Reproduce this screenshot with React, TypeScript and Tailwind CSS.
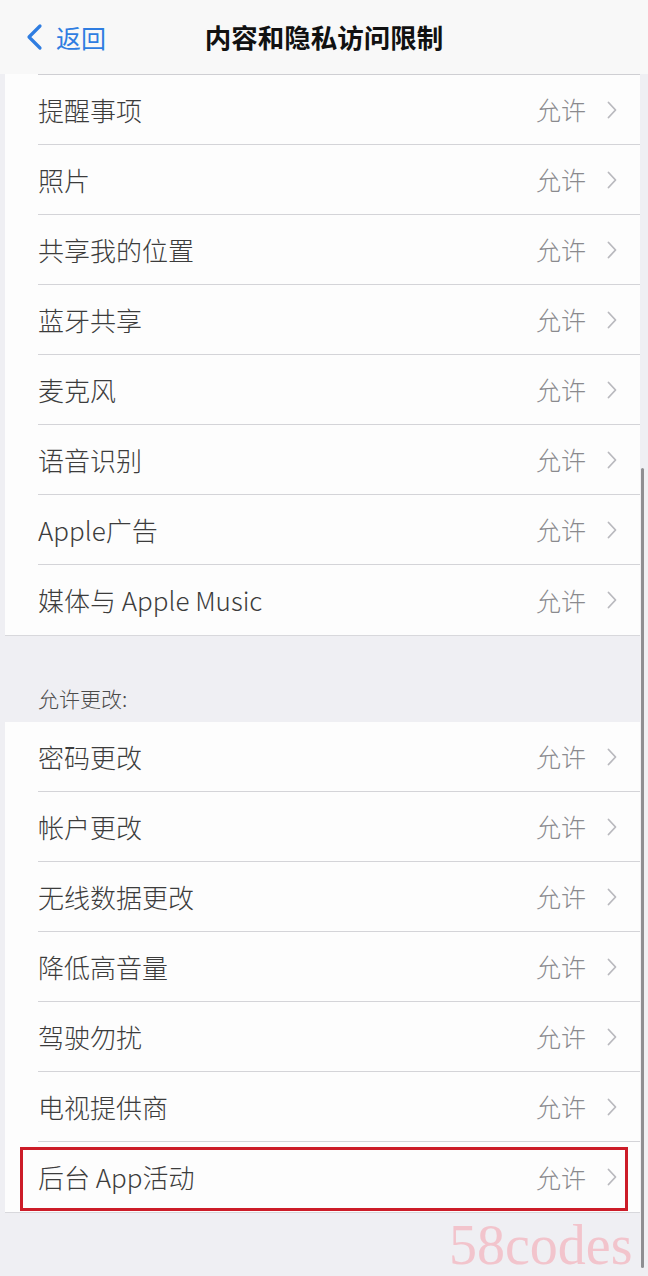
import React from "react";

const font = { fontFamily: '"Noto Sans CJK SC", "Noto Sans", sans-serif' };

function Chevron() {
  return (
    <svg width="12" height="20" viewBox="0 0 12 20" className="shrink-0">
      <path d="M2.5 2.5 L9.5 10 L2.5 17.5" fill="none" stroke="#b9b9be" strokeWidth="1.8" strokeLinecap="round" strokeLinejoin="round" />
    </svg>
  );
}

function Row({ label, last, highlight }: { label: string; last?: boolean; highlight?: boolean }) {
  return (
    <div className="relative h-[70px] pl-[33px]">
      <div className={`flex h-full items-center pr-[22px] ${last ? "" : "border-b border-[#d4d4d8]"}`}>
        <span className="flex-1 text-[26px] font-light text-[#3c3c3c] leading-none">{label}</span>
        <span className="text-[25px] font-light text-[#8a8a8e] leading-none mr-[20px]">允许</span>
        <Chevron />
      </div>
      {highlight && (
        <div className="absolute left-[15px] right-[12px] top-[5px] bottom-[1px] border-[3px] border-[#cc1c28] pointer-events-none" />
      )}
    </div>
  );
}

export default function App() {
  const s1 = ["提醒事项", "照片", "共享我的位置", "蓝牙共享", "麦克风", "语音识别", "Apple广告", "媒体与 Apple Music"];
  const s2 = ["密码更改", "帐户更改", "无线数据更改", "降低高音量", "驾驶勿扰", "电视提供商", "后台 App活动"];
  return (
    <div className="relative w-[648px] h-[1276px] overflow-hidden bg-[#efeff3]" style={font}>
      <div className="h-[74px] bg-[#f8f8f8] grid grid-cols-[1fr_auto_1fr] items-center">
        <div className="flex items-center pl-[24px] gap-[11px]">
          <svg width="21" height="28" viewBox="0 0 21 28">
            <path d="M16 3 L5 14 L16 25" fill="none" stroke="#2f7de1" strokeWidth="3.2" strokeLinecap="round" strokeLinejoin="round" />
          </svg>
          <span className="text-[25px] text-[#2f7de1] leading-none">返回</span>
        </div>
        <div className="text-[26.5px] font-bold text-[#111] leading-none">内容和隐私访问限制</div>
        <div />
      </div>
      <div className="pl-[5px] pr-[8px]">
        <div className="bg-[#fdfdfd] border-b border-[#d8d8dc]">
          <div className="ml-[33px] h-px bg-[#cfcfd3]" />
          {s1.map((l, i) => (
            <Row key={l} label={l} last={i === s1.length - 1} />
          ))}
        </div>
        <div className="pt-[50px] pb-[11px] pl-[33px] text-[21px] font-light text-[#4a4a4a] leading-[25px]">允许更改:</div>
        <div className="bg-[#fdfdfd] border-b border-[#d8d8dc]">
          {s2.map((l, i) => (
            <Row key={l} label={l} last={i === s2.length - 1} highlight={i === s2.length - 1} />
          ))}
        </div>
      </div>
      <div className="absolute left-[641px] top-[468px] w-[3px] h-[800px] bg-[#8e8e92] rounded-full" />
      <div
        className="absolute left-[449px] top-[1217px] text-[56px] leading-none text-[#f2c4cc]"
        style={{ fontFamily: '"Liberation Serif", serif' }}
      >
        58codes
      </div>
    </div>
  );
}
